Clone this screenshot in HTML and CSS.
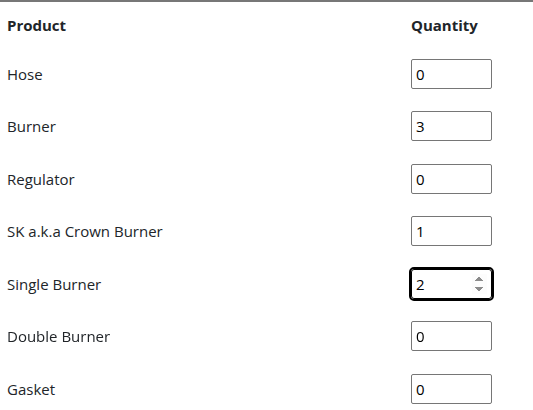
FILE: index.html
```html
<!DOCTYPE html>
<html>
<head>
    <meta name="viewport" content="width=device-width, initial-scale=1">
    <link rel="stylesheet" href="styles.css">
</head>
<body>

<table class="order-table">
    <thead>
        <tr>
            <th>Product</th>
            <th class="qty-col">Quantity</th>
        </tr>
    </thead>
    <tbody>
        <tr><td>Hose</td><td><input type="number" value="0"></td></tr>
        <tr><td>Burner</td><td><input type="number" value="3"></td></tr>
        <tr><td>Regulator</td><td><input type="number" value="0"></td></tr>
        <tr><td>SK a.k.a Crown Burner</td><td><input type="number" value="1"></td></tr>
        <tr><td>Single Burner</td><td><input type="number" value="2" autofocus></td></tr>
        <tr><td>Double Burner</td><td><input type="number" value="0"></td></tr>
        <tr><td>Gasket</td><td><input type="number" value="0"></td></tr>
    </tbody>
</table>

</body>
</html>
```

FILE: styles.css
```css
body {
    font-family: 'Open Sans', sans-serif;
    color: #212529;
    background-color: #fff;
    margin: 0;
    padding: 0;
}
.order-table {
    width: 100%;
    border-collapse: collapse;
    border-top: 2px solid #777;
    font-size: 15px;
}
.order-table th {
    text-align: left;
    font-weight: 700;
    padding: 0 7px;
    height: 45.5px;
    vertical-align: middle;
}
.order-table td {
    padding: 11.25px 7px;
    vertical-align: middle;
}
.qty-col {
    width: 115px;
}
.order-table input {
    width: 81px;
    height: 30px;
    box-sizing: border-box;
    border: 1px solid #767676;
    border-radius: 2px;
    padding: 0 4px;
    font-family: 'Open Sans', sans-serif;
    font-size: 15px;
    color: #000;
}
.order-table input:focus {
    outline: 2px solid #000;
    outline-offset: 0;
    border-color: #000;
    border-radius: 3px;
}
```
